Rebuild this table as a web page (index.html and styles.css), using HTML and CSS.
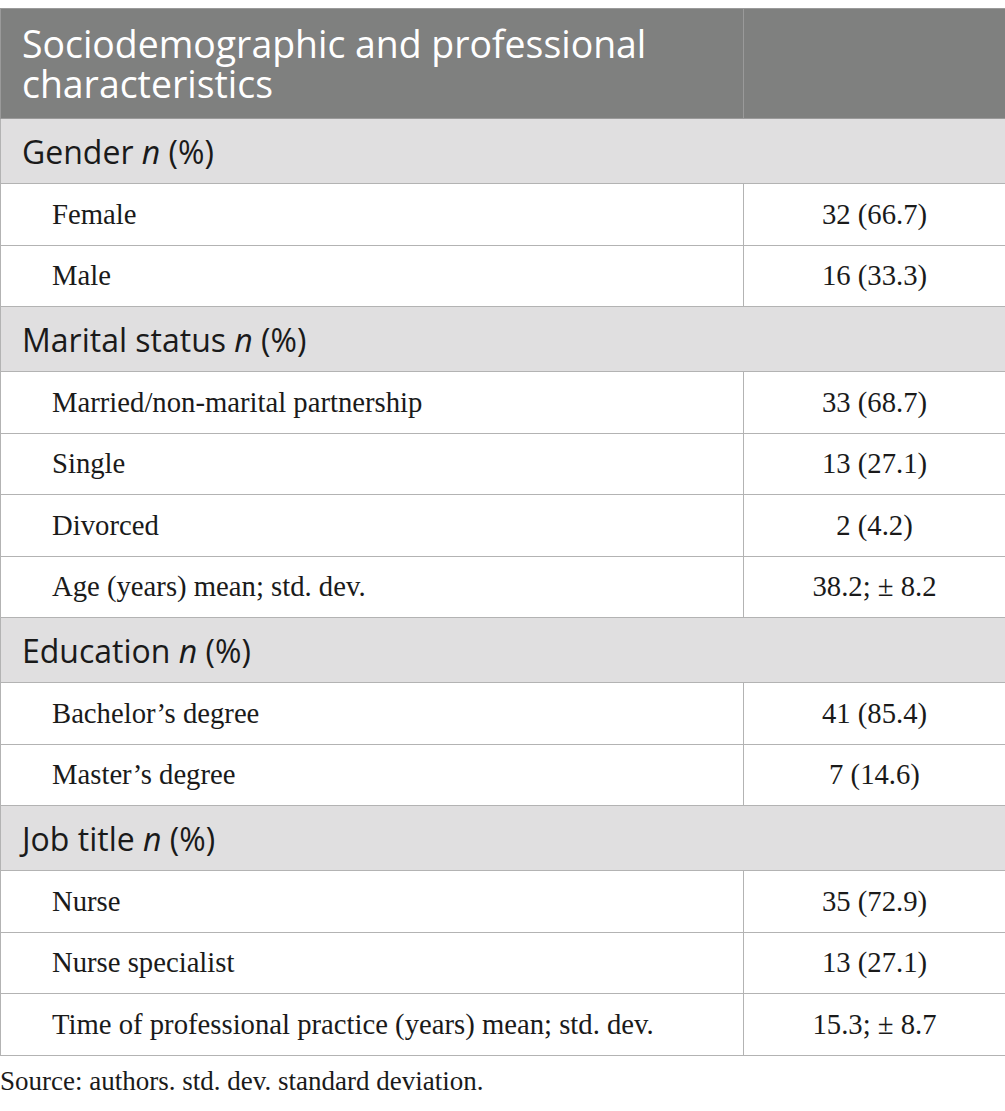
FILE: index.html
```html
<!DOCTYPE html>
<html lang="en">
<head>
<meta charset="utf-8">
<title>Sociodemographic and professional characteristics</title>
<link rel="stylesheet" href="styles.css">
</head>
<body>
<table class="tbl">
  <colgroup><col class="c1"><col class="c2"></colgroup>
  <thead>
    <tr class="head"><th>Sociodemographic and professional characteristics</th><th></th></tr>
  </thead>
  <tbody>
    <tr class="cat"><td colspan="2">Gender <i>n</i> (%)</td></tr>
    <tr class="row"><td>Female</td><td>32 (66.7)</td></tr>
    <tr class="row"><td>Male</td><td>16 (33.3)</td></tr>
    <tr class="cat"><td colspan="2">Marital status <i>n</i> (%)</td></tr>
    <tr class="row"><td>Married/non-marital partnership</td><td>33 (68.7)</td></tr>
    <tr class="row"><td>Single</td><td>13 (27.1)</td></tr>
    <tr class="row"><td>Divorced</td><td>2 (4.2)</td></tr>
    <tr class="row"><td>Age (years) mean; std. dev.</td><td>38.2; ± 8.2</td></tr>
    <tr class="cat"><td colspan="2">Education <i>n</i> (%)</td></tr>
    <tr class="row"><td>Bachelor’s degree</td><td>41 (85.4)</td></tr>
    <tr class="row"><td>Master’s degree</td><td>7 (14.6)</td></tr>
    <tr class="cat"><td colspan="2">Job title <i>n</i> (%)</td></tr>
    <tr class="row"><td>Nurse</td><td>35 (72.9)</td></tr>
    <tr class="row"><td>Nurse specialist</td><td>13 (27.1)</td></tr>
    <tr class="row"><td>Time of professional practice (years) mean; std. dev.</td><td>15.3; ± 8.7</td></tr>
  </tbody>
</table>
<p class="note">Source: authors. std. dev. standard deviation.</p>
</body>
</html>
```
FILE: styles.css
```css
html, body { margin: 0; padding: 0; background: #fff; }
body { padding-top: 8px; }
.tbl {
  width: 1005px;
  border-collapse: collapse;
  table-layout: fixed;
}
.c1 { width: 743px; }
.c2 { width: 262px; }
.tbl th, .tbl td {
  border: 1px solid #b3b3b3;
  padding: 0;
}
.head th {
  background: #7f807f;
  color: #fff;
  font-family: "Open Sans", "Noto Sans", sans-serif;
  font-weight: 400;
  font-size: 37.4px;
  line-height: 40px;
  text-align: left;
  height: 109px;
  padding: 0 40px 0 21px;
  vertical-align: middle;
  border-color: #9a9a9a;
}
.cat td {
  background: #e0dfe0;
  color: #1a1a1a;
  font-family: "Open Sans", "Noto Sans", sans-serif;
  font-size: 32px;
  height: 64px;
  padding-left: 21px;
  vertical-align: middle;
}
.row td {
  color: #1a1a1a;
  font-family: "Liberation Serif", "Times New Roman", serif;
  font-size: 28.7px;
  height: 60.5px;
  vertical-align: middle;
}
.row td:first-child { padding-left: 51px; }
.row td:last-child { text-align: center; }
.note {
  margin: 10px 0 0 0;
  font-family: "Liberation Serif", "Times New Roman", serif;
  font-size: 27px;
  color: #1a1a1a;
}
```
